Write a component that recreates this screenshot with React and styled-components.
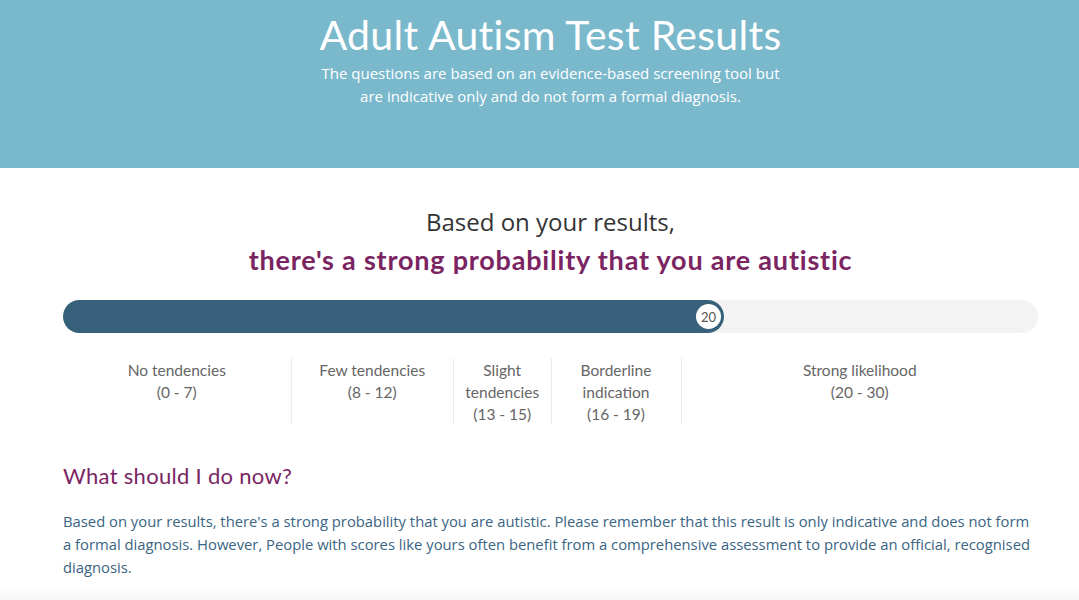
import React from "react";
import styled, { createGlobalStyle } from "styled-components";

const GlobalStyle = createGlobalStyle`
  body {
    margin: 0;
    background: #ffffff;
    font-family: "Open Sans", "Liberation Sans", sans-serif;
    overflow: hidden;
  }
`;

const heading = `"Lato", "Open Sans", sans-serif`;

const Page = styled.div`
  position: relative;
  height: 600px;
  overflow: hidden;
`;

const Hero = styled.header`
  height: 168px;
  background-color: #7ab8cc;
  box-sizing: border-box;
  padding-top: 11px;
`;

const Inner = styled.div`
  width: 975px;
  margin-left: 63px;
`;

const HeroTitle = styled.h1`
  margin: 0;
  text-align: center;
  font-family: ${heading};
  font-weight: 400;
  font-size: 41px;
  line-height: 48px;
  color: #ffffff;
  letter-spacing: 0.3px;
`;

const HeroText = styled.p`
  margin: 3px auto 0;
  width: 480px;
  text-align: center;
  font-size: 15px;
  line-height: 23px;
  color: #ffffff;
`;

const Results = styled.section`
  padding-top: 37px;
`;

const Lead = styled.h2`
  margin: 0;
  text-align: center;
  font-weight: 400;
  font-size: 24px;
  line-height: 34px;
  color: #333333;
`;

const Verdict = styled.h3`
  margin: 2px 0 0;
  text-align: center;
  font-family: ${heading};
  font-weight: 700;
  font-size: 27px;
  line-height: 38px;
  letter-spacing: 0.8px;
  color: #7a2562;
`;

const Track = styled.div`
  margin-top: 21px;
  height: 33px;
  border-radius: 17px;
  background: #f3f3f3;
  position: relative;
`;

const Fill = styled.div`
  height: 100%;
  border-radius: 17px;
  background: #37617a;
  display: flex;
  justify-content: flex-end;
  align-items: center;
  padding-right: 3px;
  box-sizing: border-box;
`;

const Knob = styled.span`
  width: 25px;
  height: 25px;
  border-radius: 50%;
  background: #ffffff;
  display: flex;
  align-items: center;
  justify-content: center;
  font-family: ${heading};
  font-size: 13px;
  color: #555555;
`;

const Scale = styled.div`
  margin-top: 25px;
  display: grid;
  grid-template-columns: 7fr 5fr 3fr 4fr 11fr;
`;

const Band = styled.div`
  min-height: 66px;
  padding-top: 1px;
  text-align: center;
  font-family: ${heading};
  font-size: 15.5px;
  line-height: 22px;
  color: #666666;
  border-left: ${(p) => (p.$first ? "none" : "1px solid #ececec")};
`;

const Advice = styled.section`
  margin-top: 36px;
`;

const AdviceTitle = styled.h4`
  margin: 0;
  font-family: ${heading};
  font-weight: 400;
  font-size: 22px;
  line-height: 30px;
  letter-spacing: 0.3px;
  color: #7a2562;
`;

const AdviceText = styled.p`
  margin: 19px 0 0;
  font-size: 14.8px;
  line-height: 23px;
  color: #3a6482;
`;

const Fade = styled.div`
  position: absolute;
  left: 0;
  right: 0;
  bottom: 0;
  height: 14px;
  background: linear-gradient(rgba(0, 0, 0, 0), rgba(0, 0, 0, 0.035));
`;

const bands = [
  ["No tendencies", "(0 - 7)"],
  ["Few tendencies", "(8 - 12)"],
  ["Slight", "tendencies", "(13 - 15)"],
  ["Borderline", "indication", "(16 - 19)"],
  ["Strong likelihood", "(20 - 30)"],
];

const App = () => {
  const score = 20;
  return (
    <Page>
      <GlobalStyle />
      <Hero>
        <Inner>
          <HeroTitle>Adult Autism Test Results</HeroTitle>
          <HeroText>
            The questions are based on an evidence-based screening tool but
            are indicative only and do not form a formal diagnosis.
          </HeroText>
        </Inner>
      </Hero>
      <Inner>
        <Results>
          <Lead>Based on your results,</Lead>
          <Verdict>there's a strong probability that you are autistic</Verdict>
          <Track>
            <Fill style={{ width: `calc(${(score / 30) * 100}% + 11px)` }}>
              <Knob>{score}</Knob>
            </Fill>
          </Track>
          <Scale>
            {bands.map((lines, i) => (
              <Band key={i} $first={i === 0}>
                {lines.map((l) => (
                  <div key={l}>{l}</div>
                ))}
              </Band>
            ))}
          </Scale>
        </Results>
        <Advice>
          <AdviceTitle>What should I do now?</AdviceTitle>
          <AdviceText>
            Based on your results, there's a strong probability that you are
            autistic. Please remember that this result is only indicative and
            does not form a formal diagnosis. However, People with scores like
            yours often benefit from a comprehensive assessment to provide an
            official, recognised diagnosis.
          </AdviceText>
        </Advice>
      </Inner>
      <Fade />
    </Page>
  );
};

export default App;
